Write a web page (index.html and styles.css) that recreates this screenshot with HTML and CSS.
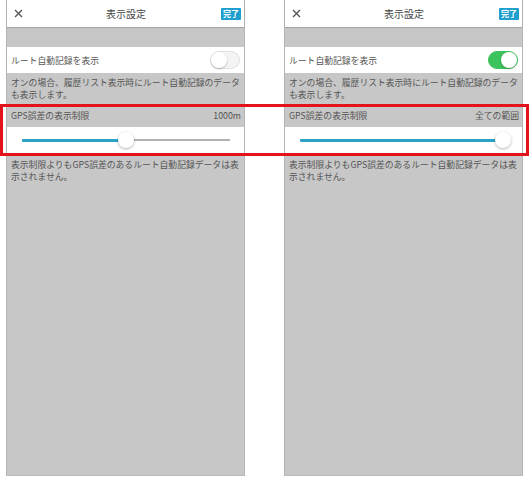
FILE: index.html
```html
<!DOCTYPE html>
<html lang="ja">
<head>
    <meta charset="UTF-8">
    <title>表示設定</title>
    <link rel="stylesheet" href="styles.css">
</head>
<body>
    <div class="compare">
        <div class="screen">
            <div class="header">
                <svg class="close" width="9" height="9" viewBox="0 0 9 9"><path d="M1 1L8 8M8 1L1 8" stroke="#555" stroke-width="1.4"/></svg>
                <div class="title">表示設定</div>
                <div class="done">完了</div>
            </div>
            <div class="spacer"></div>
            <div class="row">
                <span class="label">ルート自動記録を表示</span>
                <span class="toggle"><span class="knob"></span></span>
            </div>
            <p class="note">オンの場合、履歴リスト表示時にルート自動記録のデータも表示します。</p>
            <div class="section-head">
                <span>GPS誤差の表示制限</span>
                <span>1000m</span>
            </div>
            <div class="slider-row">
                <div class="slider">
                    <div class="fill" style="width: 104px"></div>
                    <div class="thumb"></div>
                    <div class="rest"></div>
                </div>
            </div>
            <p class="note">表示制限よりもGPS誤差のあるルート自動記録データは表示されません。</p>
        </div>

        <div class="screen">
            <div class="header">
                <svg class="close" width="9" height="9" viewBox="0 0 9 9"><path d="M1 1L8 8M8 1L1 8" stroke="#555" stroke-width="1.4"/></svg>
                <div class="title">表示設定</div>
                <div class="done">完了</div>
            </div>
            <div class="spacer"></div>
            <div class="row">
                <span class="label">ルート自動記録を表示</span>
                <span class="toggle on"><span class="knob"></span></span>
            </div>
            <p class="note">オンの場合、履歴リスト表示時にルート自動記録のデータも表示します。</p>
            <div class="section-head">
                <span>GPS誤差の表示制限</span>
                <span>全ての範囲</span>
            </div>
            <div class="slider-row">
                <div class="slider">
                    <div class="fill" style="width: 203px"></div>
                    <div class="thumb"></div>
                    <div class="rest"></div>
                </div>
            </div>
            <p class="note">表示制限よりもGPS誤差のあるルート自動記録データは表示されません。</p>
        </div>

        <div class="highlight"></div>
    </div>
</body>
</html>
```

FILE: styles.css
```css
* {
    box-sizing: border-box;
    margin: 0;
    padding: 0;
}

body {
    font-family: "Noto Sans CJK JP", "Noto Sans", sans-serif;
    background: white;
}

.compare {
    position: relative;
    display: flex;
    gap: 39px;
    padding-left: 6px;
    width: 530px;
    height: 478px;
}

.screen {
    width: 239px;
    height: 476px;
    background: #c7c7c7;
    border-left: 1px solid #b4b4b4;
    border-right: 1px solid #b4b4b4;
    border-bottom: 1px solid #b9b9b9;
    color: #555;
}

.header {
    display: flex;
    align-items: center;
    height: 27px;
    padding: 0 3px 0 7px;
    background: white;
    box-shadow: 0 1px 1px rgba(0, 0, 0, 0.15);
    position: relative;
}

.close {
    flex: none;
}

.title {
    flex: 1;
    text-align: center;
    font-size: 10px;
    color: #444;
    padding-left: 8px;
}

.done {
    background: #1e9fcd;
    color: white;
    font-size: 8px;
    font-weight: bold;
    line-height: 12px;
    padding: 0 2px;
    border-radius: 1px;
}

.spacer {
    height: 20px;
}

.row {
    display: flex;
    align-items: center;
    justify-content: space-between;
    height: 26px;
    padding: 0 4px 0 4px;
    background: white;
}

.label {
    font-size: 8.8px;
    color: #555;
}

.toggle {
    width: 30px;
    height: 18px;
    border-radius: 9px;
    background: #f4f4f4;
    border: 1px solid #e2e2e2;
    position: relative;
}

.knob {
    position: absolute;
    top: 0;
    left: 0;
    width: 16px;
    height: 16px;
    border-radius: 50%;
    background: white;
    box-shadow: 0 1px 2px rgba(0, 0, 0, 0.25);
}

.toggle.on {
    background: #3cc35b;
    border-color: #3cc35b;
}

.toggle.on .knob {
    left: 12px;
}

.note {
    font-size: 8.8px;
    line-height: 11.5px;
    color: #555;
    padding: 4px 4px 0 4px;
    height: 31px;
}

.section-head {
    display: flex;
    justify-content: space-between;
    align-items: center;
    height: 23px;
    padding: 0 3px 0 4px;
    font-size: 8.8px;
    color: #555;
}

.slider-row {
    display: flex;
    align-items: center;
    height: 26px;
    padding: 0 14px 0 15px;
    background: white;
}

.slider {
    display: flex;
    align-items: center;
    width: 208px;
}

.fill {
    height: 3px;
    background: #2aa2c6;
    border-radius: 1px;
}

.thumb {
    flex: none;
    width: 16px;
    height: 16px;
    margin: 0 -8px;
    border-radius: 50%;
    background: white;
    box-shadow: 0 1px 3px rgba(0, 0, 0, 0.3);
    position: relative;
}

.rest {
    flex: 1;
    height: 2px;
    background: #b3b3b3;
}

.slider-row + .note {
    padding-top: 6px;
}

.highlight {
    position: absolute;
    left: 0;
    top: 104px;
    width: 529px;
    height: 52px;
    border: 3px solid #e4121b;
}
```
